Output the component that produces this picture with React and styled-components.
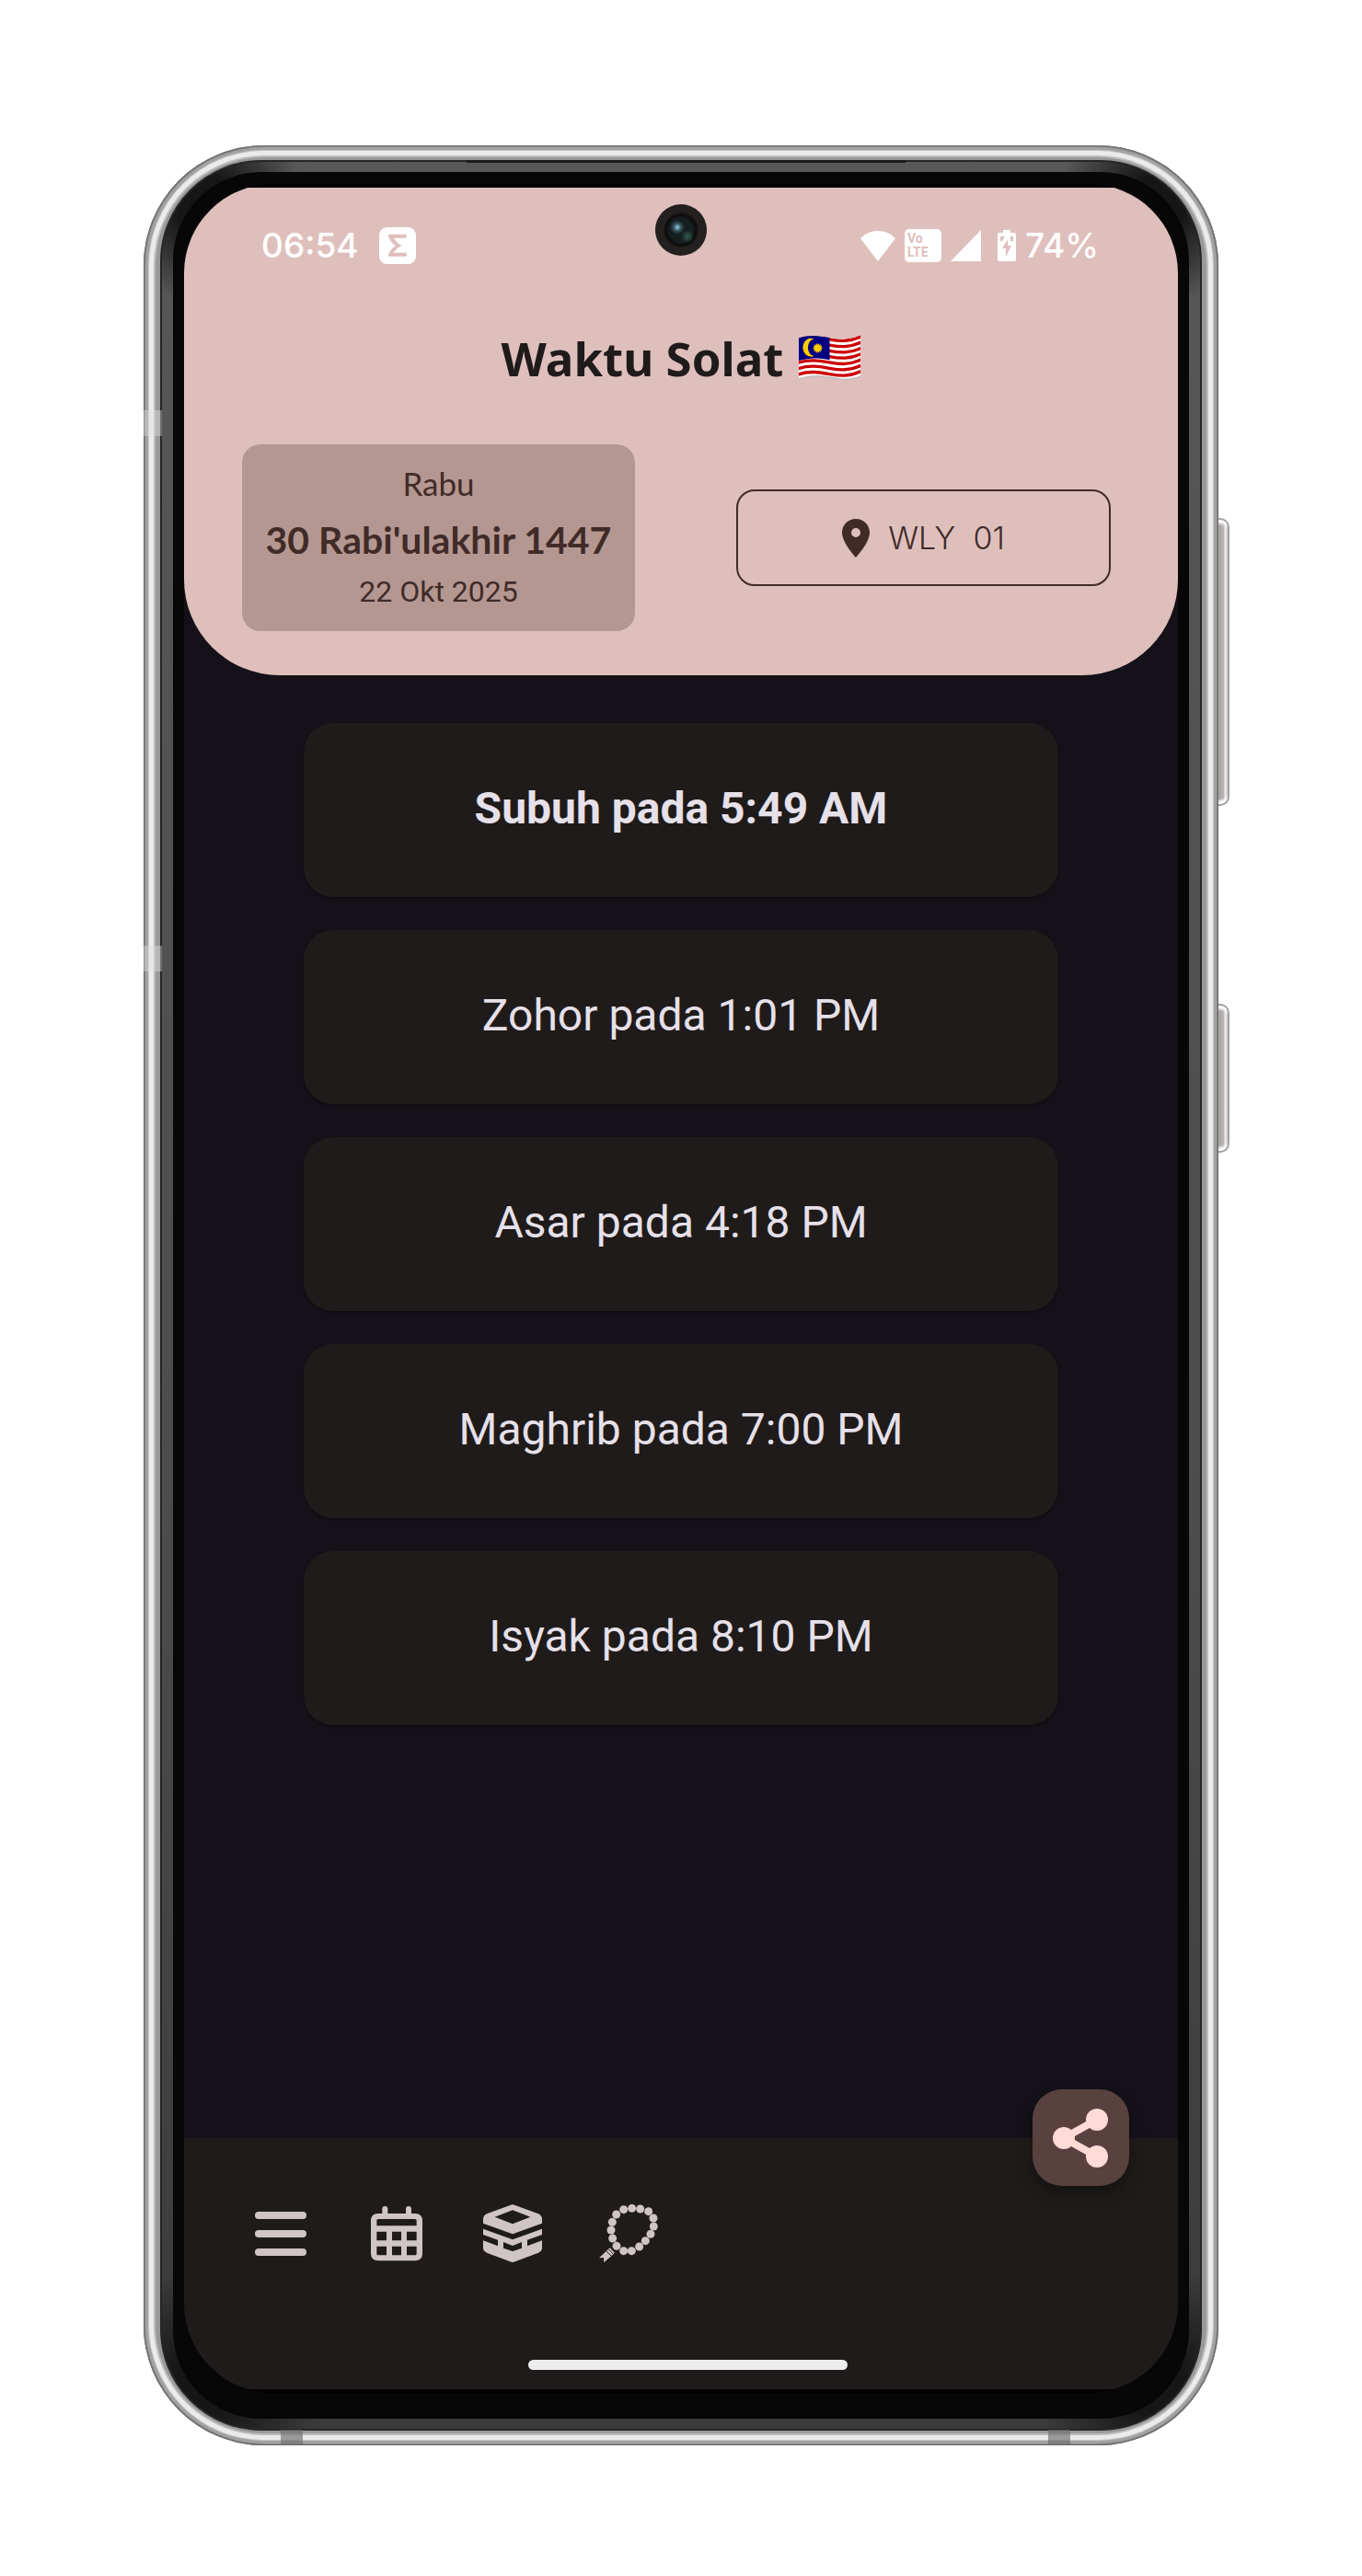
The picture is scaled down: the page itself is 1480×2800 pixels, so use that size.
import React from "react";
import styled, { createGlobalStyle } from "styled-components";

const color = {
  blush: "#dfbfbc",
  mauve: "#b49791",
  cocoa: "#402b28",
  ink: "#1f1b1a",
  night: "#141118",
  card: "#1f1b1a",
  text: "#e6e0e9",
  icon: "#cfc5c4",
  fab: "#594140",
  fabIcon: "#ffdad6",
};

const GlobalStyle = createGlobalStyle`
  *, *::before, *::after { box-sizing: border-box; }
  body {
    margin: 0;
    background: #fff;
    font-family: Roboto, "Noto Sans", sans-serif;
  }
  button { font: inherit; color: inherit; cursor: pointer; }
  h1, p, ul { margin: 0; padding: 0; }
`;

const Page = styled.main`
  display: flex;
  justify-content: center;
  padding: 158px 24px 142px;
`;

/* ---------- device ---------- */

const Device = styled.div`
  position: relative;
  display: flex;
  width: 100%;
  max-width: 1168px;
  aspect-ratio: 1168 / 2500;
`;

const Metal = styled.div`
  flex: 1;
  display: flex;
  padding: 16px 18px;
  border-radius: 131px;
  background: #999;
  box-shadow:
    inset 0 0 0 1px #6c6c6c,
    inset 0 0 0 2px #858585,
    inset 0 0 0 5px #a2a2a2,
    inset 0 0 0 6px #c6c6c6,
    inset 0 0 0 11px #ebebeb,
    inset 0 0 0 13px #bcbcbc;
`;

const Band = styled.div`
  flex: 1;
  display: flex;
  padding: 11px 12px;
  border: 2px solid #262626;
  border-radius: 110px;
  background:
    radial-gradient(circle at 44px 44px, #161616 30px, transparent 110px),
    radial-gradient(circle at calc(100% - 44px) 44px, #161616 30px, transparent 110px),
    radial-gradient(circle at 44px calc(100% - 44px), #161616 30px, transparent 130px),
    radial-gradient(circle at calc(100% - 44px) calc(100% - 44px), #161616 30px, transparent 130px),
    linear-gradient(#585858, #4c4c4c 60%, #3a3a3a);
`;

const Bezel = styled.div`
  flex: 1;
  display: flex;
  padding: 13px 12px 28px;
  border-radius: 96px;
  background: #070707;
`;

const ScreenMask = styled.div`
  flex: 1;
  display: flex;
  padding: 4px 0;
  overflow: hidden;
  border-radius: 97px;
  background: #000;
`;

const Screen = styled.div`
  flex: 1;
  display: flex;
  flex-direction: column;
  min-width: 0;
  background: ${color.night};
`;

const SideKey = styled.span`
  position: absolute;
  left: 100%;
  top: ${(p) => p.$top};
  width: 12px;
  height: ${(p) => p.$height};
  border: 2px solid #a3a3a3;
  border-left: 0;
  border-radius: 0 10px 10px 0;
  background: linear-gradient(90deg, #a39f9e, #bdb7b6 60%, #f2f2f2 70%, #c4c4c4);
  box-shadow: inset 0 6px 3px -2px #fff, inset 0 -6px 3px -2px #fff;
`;

const SideSeam = styled.span`
  position: absolute;
  left: 0;
  top: ${(p) => p.$top};
  width: 20px;
  height: 28px;
  background: rgba(225, 225, 225, 0.4);
`;

const FootSeam = styled.span`
  position: absolute;
  bottom: 0;
  ${(p) => p.$side}: ${(p) => p.$inset};
  width: 24px;
  height: 17px;
  background: rgba(110, 110, 110, 0.65);
`;

const Earpiece = styled.span`
  position: absolute;
  top: 16px;
  left: 30%;
  right: 29%;
  height: 3px;
  border-radius: 0 0 3px 3px;
  background: #1a1a1a;
`;

const Camera = styled.span`
  position: absolute;
  top: 64px;
  left: 50%;
  width: 56px;
  height: 56px;
  margin-left: -28px;
  border-radius: 50%;
  background:
    radial-gradient(circle at 24px 25px, #7fb0c0 1px, rgba(60, 95, 110, 0.8) 4px, transparent 8px),
    radial-gradient(circle at 35px 35px, #2c5548 1px, transparent 7px),
    radial-gradient(circle, #161d1f 13px, #0c0e0e 16px, #131211 18px, #23201f 19px);
`;

/* ---------- header ---------- */

const Header = styled.header`
  padding: 31px 0 48px;
  border-radius: 0 0 104px 104px;
  background: ${color.blush};
`;

const StatusBar = styled.div`
  display: flex;
  align-items: center;
  justify-content: space-between;
  height: 64px;
  padding: 0 86px 0 84px;
  color: #fff;
  font: 500 37px/64px Inter, Roboto, sans-serif;
`;

const StatusGroup = styled.div`
  display: flex;
  align-items: center;
  gap: ${(p) => p.$gap};
`;

const VolteBadge = styled.span`
  width: 40px;
  height: 36px;
  padding: 3px;
  border-radius: 5px;
  background: #fff;
  color: ${color.blush};
  font: 700 14px/15px Roboto, sans-serif;
`;

const Title = styled.h1`
  display: flex;
  align-items: center;
  justify-content: center;
  gap: 17px;
  margin-top: 54px;
  color: ${color.ink};
  font: 700 51px/72px "Noto Sans", sans-serif;
`;

const HeaderRow = styled.div`
  display: flex;
  align-items: center;
  justify-content: space-between;
  margin-top: 58px;
  padding: 0 73px 0 63px;
`;

const DateCard = styled.section`
  display: flex;
  flex-direction: column;
  align-items: center;
  gap: 8px;
  flex: 0 1 427px;
  padding: 18px 0 25px;
  border-radius: 20px;
  background: ${color.mauve};
  color: ${color.cocoa};
  white-space: nowrap;
`;

const DayName = styled.p`
  font: 400 35px/48px Lato, sans-serif;
`;

const HijriDate = styled.p`
  font: 700 41px/60px Lato, sans-serif;
`;

const CivilDate = styled.p`
  font: 400 32px/36px Roboto, sans-serif;
`;

const ZoneButton = styled.button`
  display: flex;
  align-items: center;
  justify-content: center;
  gap: 20px;
  flex: 0 1 407px;
  height: 105px;
  padding: 0;
  border: 2px solid ${color.cocoa};
  border-radius: 20px;
  background: transparent;
  color: ${color.cocoa};
  font: 300 34px/40px Inter, sans-serif;
  white-space: pre;
`;

/* ---------- prayer times ---------- */

const PrayerList = styled.ul`
  display: flex;
  flex: 1;
  flex-direction: column;
  gap: 36px;
  width: 76%;
  margin: 0 auto;
  padding-top: 52px;
  list-style: none;
`;

const PrayerItem = styled.li`
  display: flex;
  align-items: center;
  justify-content: center;
  height: 189px;
  padding-bottom: 3px;
  border-radius: 32px;
  background: ${color.card};
  box-shadow: 0 2px 3px rgba(0, 0, 0, 0.25);
  color: ${color.text};
  font-size: 48px;
  line-height: 56px;
  font-weight: ${(p) => (p.$current ? 700 : 400)};
`;

/* ---------- bottom bar ---------- */

const BottomBar = styled.nav`
  position: relative;
  display: flex;
  flex-direction: column;
  justify-content: space-between;
  height: 273px;
  padding: 72px 58px 21px 73px;
  background: ${color.ink};
`;

const NavGroup = styled.div`
  display: flex;
  gap: 62px;
`;

const NavButton = styled.button`
  display: grid;
  place-items: center;
  width: 64px;
  height: 64px;
  padding: 0;
  border: 0;
  background: transparent;
  color: ${color.icon};
`;

const ShareButton = styled.button`
  position: absolute;
  top: -53px;
  right: 53px;
  display: grid;
  place-items: center;
  width: 105px;
  height: 105px;
  padding: 0 2px 0 0;
  border: 0;
  border-radius: 32px;
  background: ${color.fab};
  color: ${color.fabIcon};
  box-shadow: 0 8px 16px rgba(0, 0, 0, 0.35);
`;

const HomeIndicator = styled.span`
  align-self: center;
  width: 347px;
  height: 11px;
  border-radius: 6px;
  background: #ededed;
`;

/* ---------- drawings ---------- */

const SigmaIcon = () => (
  <svg width="40" height="40" viewBox="0 0 120 120" aria-hidden="true">
    <rect width="120" height="120" rx="26" fill="#fff" />
    <path
      d="M29 23H89V35H48Q54 50 74 59Q56 68 46 83H89V95H29Q32 74 54 60Q32 46 29 23Z"
      fill={color.blush}
    />
  </svg>
);

const WifiIcon = () => (
  <svg width="38" height="34" viewBox="0 0 38 34" aria-hidden="true">
    <path d="M19 34L0 9Q8 1 19 1T38 9Z" fill="#fff" />
  </svg>
);

const SignalIcon = () => (
  <svg width="33" height="34" viewBox="0 0 33 34" aria-hidden="true">
    <path d="M33 0V34H0Z" fill="#fff" />
  </svg>
);

const BatteryIcon = () => (
  <svg width="20" height="34" viewBox="0 0 20 34" aria-hidden="true">
    <path d="M6 0H14V3H18Q20 3 20 5V32Q20 34 18 34H2Q0 34 0 32V5Q0 3 2 3H6Z" fill="#fff" />
    <path d="M3 7H8L5 12H3ZM12 7H14V12H17V7H15ZM11 10L5 20H9V29L15 17H11Z" fill={color.blush} />
  </svg>
);

const SUN_POINTS = Array.from({ length: 28 }, (_, i) => {
  const angle = (i * Math.PI) / 14;
  const r = i % 2 ? 11 : 17;
  return `${62 + r * Math.cos(angle)},${43 + r * Math.sin(angle)}`;
}).join(" ");

const FLAG_EDGE = "C35 -2 65 3 100 9S165 18 202 0";

const FlagIcon = () => (
  <svg width="67" height="50" viewBox="0 0 202 150" role="img" aria-label="Malaysia">
    <path d={`M0 14${FLAG_EDGE}V138C165 152 140 149 100 142S35 136 0 148Z`} fill="#c4bebe" />
    <clipPath id="flag">
      <path d="M0 10C35 -2 65 3 100 9S165 18 202 0V132C165 150 135 142 100 136S35 130 0 142Z" />
    </clipPath>
    <g clipPath="url(#flag)">
      <rect width="202" height="150" fill="#fff" />
      {[0, 1, 2, 3, 4, 5, 6].map((i) => (
        <path
          key={i}
          d="M-2 15C35 3 65 8 100 14S165 23 204 5"
          transform={`translate(0 ${i * 19})`}
          fill="none"
          stroke="#cc0001"
          strokeWidth="10"
        />
      ))}
      <path d="M0 0H101V82C65 74 35 74 0 84Z" fill="#010080" />
      <path d="M50 13A27 30 0 1 0 50 69A20 28 0 1 1 50 13Z" fill="#fc0" />
      <polygon points={SUN_POINTS} fill="#fc0" />
    </g>
  </svg>
);

const PinIcon = () => (
  <svg width="30" height="42" viewBox="0 0 30 42" aria-hidden="true">
    <path
      fillRule="evenodd"
      d="M15 0C6 0 0 7 0 15C0 26 15 42 15 42S30 26 30 15C30 7 24 0 15 0ZM15 10A5 5 0 1 1 15 20A5 5 0 1 1 15 10Z"
      fill="currentColor"
    />
  </svg>
);

const MenuIcon = () => (
  <svg width="56" height="48" viewBox="0 0 56 48" aria-hidden="true">
    <g fill="currentColor">
      <rect width="56" height="8" rx="4" />
      <rect y="20" width="56" height="8" rx="4" />
      <rect y="40" width="56" height="8" rx="4" />
    </g>
  </svg>
);

const CalendarIcon = () => (
  <svg width="56" height="60" viewBox="0 0 168 180" aria-hidden="true">
    <path
      fillRule="evenodd"
      fill="currentColor"
      d="M37 24V9Q37 0 46 0T55 9V24H114V9Q114 0 123 0T132 9V24H144Q168 24 168 48V154Q168 178 144 178H24Q0 178 0 154V48Q0 24 24 24ZM24 42Q19 42 19 47V64H149V47Q149 42 144 42ZM19 83V112H51V83ZM69 83V112H99V83ZM117 83V112H149V83ZM19 131V155Q19 160 24 160H51V131ZM69 131V160H99V131ZM117 131V160H144Q149 160 149 155V131Z"
    />
  </svg>
);

const KaabaIcon = () => (
  <svg width="64" height="64" viewBox="0 0 192 192" aria-hidden="true">
    <g fill="currentColor" fillRule="evenodd">
      <path d="M88 3Q96 -1 104 3L180 31Q192 37 192 48V62L96 97L0 62V48Q0 37 12 31ZM96 19L38 41L96 64L154 41Z" />
      <path d="M0 80L96 115L192 80V142Q192 153 180 158L104 187Q96 191 88 187L12 158Q0 153 0 142ZM0 99V118L48 136V116ZM192 99L144 116V136L192 118ZM66 123V143L96 153L126 143V123L96 135Z" />
    </g>
  </svg>
);

const BEADS = [
  [80, 17], [107, 13], [134, 15], [161, 23], [177, 45], [178, 72], [168, 97], [151, 119],
  [131, 138], [106, 152], [80, 152], [57, 136], [44, 111], [39, 84], [43, 58], [56, 33],
];

const BeadsIcon = () => (
  <svg width="64" height="64" viewBox="0 0 192 192" aria-hidden="true">
    <g fill="currentColor">
      {BEADS.map(([cx, cy]) => (
        <circle key={`${cx}-${cy}`} cx={cx} cy={cy} r="13.5" />
      ))}
      <path d="M35 142L51 158L16 190L15 174L0 175Z" />
    </g>
    <path d="M31 147L46 162M24 153L39 168" stroke={color.ink} strokeWidth="3" />
  </svg>
);

const ShareIcon = () => (
  <svg width="60" height="64" viewBox="0 0 60 64" aria-hidden="true">
    <path d="M48 12L12 32L48 52" fill="none" stroke="currentColor" strokeWidth="8" />
    <g fill="currentColor">
      <circle cx="48" cy="12" r="12" />
      <circle cx="12" cy="32" r="12" />
      <circle cx="48" cy="52" r="12" />
    </g>
  </svg>
);

/* ---------- data ---------- */

const PRAYERS = [
  { name: "Subuh", time: "5:49 AM", current: true },
  { name: "Zohor", time: "1:01 PM" },
  { name: "Asar", time: "4:18 PM" },
  { name: "Maghrib", time: "7:00 PM" },
  { name: "Isyak", time: "8:10 PM" },
];

const NAV_ITEMS = [
  { label: "Menu", Icon: MenuIcon },
  { label: "Kalendar", Icon: CalendarIcon },
  { label: "Kiblat", Icon: KaabaIcon },
  { label: "Tasbih", Icon: BeadsIcon },
];

export default function App() {
  return (
    <Page>
      <GlobalStyle />
      <Device>
        <SideKey $top="16.2%" $height="12.5%" />
        <SideKey $top="37.3%" $height="6.5%" />
        <Metal>
          <Band>
            <Bezel>
              <ScreenMask>
                <Screen>
                  <Header>
                    <StatusBar>
                      <StatusGroup $gap="22px">
                        <span>06:54</span>
                        <SigmaIcon />
                      </StatusGroup>
                      <StatusGroup $gap="18px">
                        <StatusGroup $gap="10px">
                          <WifiIcon />
                          <VolteBadge>
                            Vo
                            <br />
                            LTE
                          </VolteBadge>
                          <SignalIcon />
                        </StatusGroup>
                        <StatusGroup $gap="10px">
                          <BatteryIcon />
                          <span>74%</span>
                        </StatusGroup>
                      </StatusGroup>
                    </StatusBar>
                    <Title>
                      Waktu Solat <FlagIcon />
                    </Title>
                    <HeaderRow>
                      <DateCard>
                        <DayName>Rabu</DayName>
                        <HijriDate>30 Rabi'ulakhir 1447</HijriDate>
                        <CivilDate>22 Okt 2025</CivilDate>
                      </DateCard>
                      <ZoneButton type="button">
                        <PinIcon />
                        <span>{"WLY  01"}</span>
                      </ZoneButton>
                    </HeaderRow>
                  </Header>
                  <PrayerList>
                    {PRAYERS.map(({ name, time, current }) => (
                      <PrayerItem key={name} $current={current}>
                        {name} pada {time}
                      </PrayerItem>
                    ))}
                  </PrayerList>
                  <BottomBar>
                    <NavGroup>
                      {NAV_ITEMS.map(({ label, Icon }) => (
                        <NavButton key={label} type="button" aria-label={label}>
                          <Icon />
                        </NavButton>
                      ))}
                    </NavGroup>
                    <HomeIndicator />
                    <ShareButton type="button" aria-label="Kongsi">
                      <ShareIcon />
                    </ShareButton>
                  </BottomBar>
                </Screen>
              </ScreenMask>
            </Bezel>
          </Band>
        </Metal>
        <Earpiece />
        <Camera />
        <SideSeam $top="11.5%" />
        <SideSeam $top="34.8%" />
        <FootSeam $side="left" $inset="149px" />
        <FootSeam $side="right" $inset="161px" />
      </Device>
    </Page>
  );
}
